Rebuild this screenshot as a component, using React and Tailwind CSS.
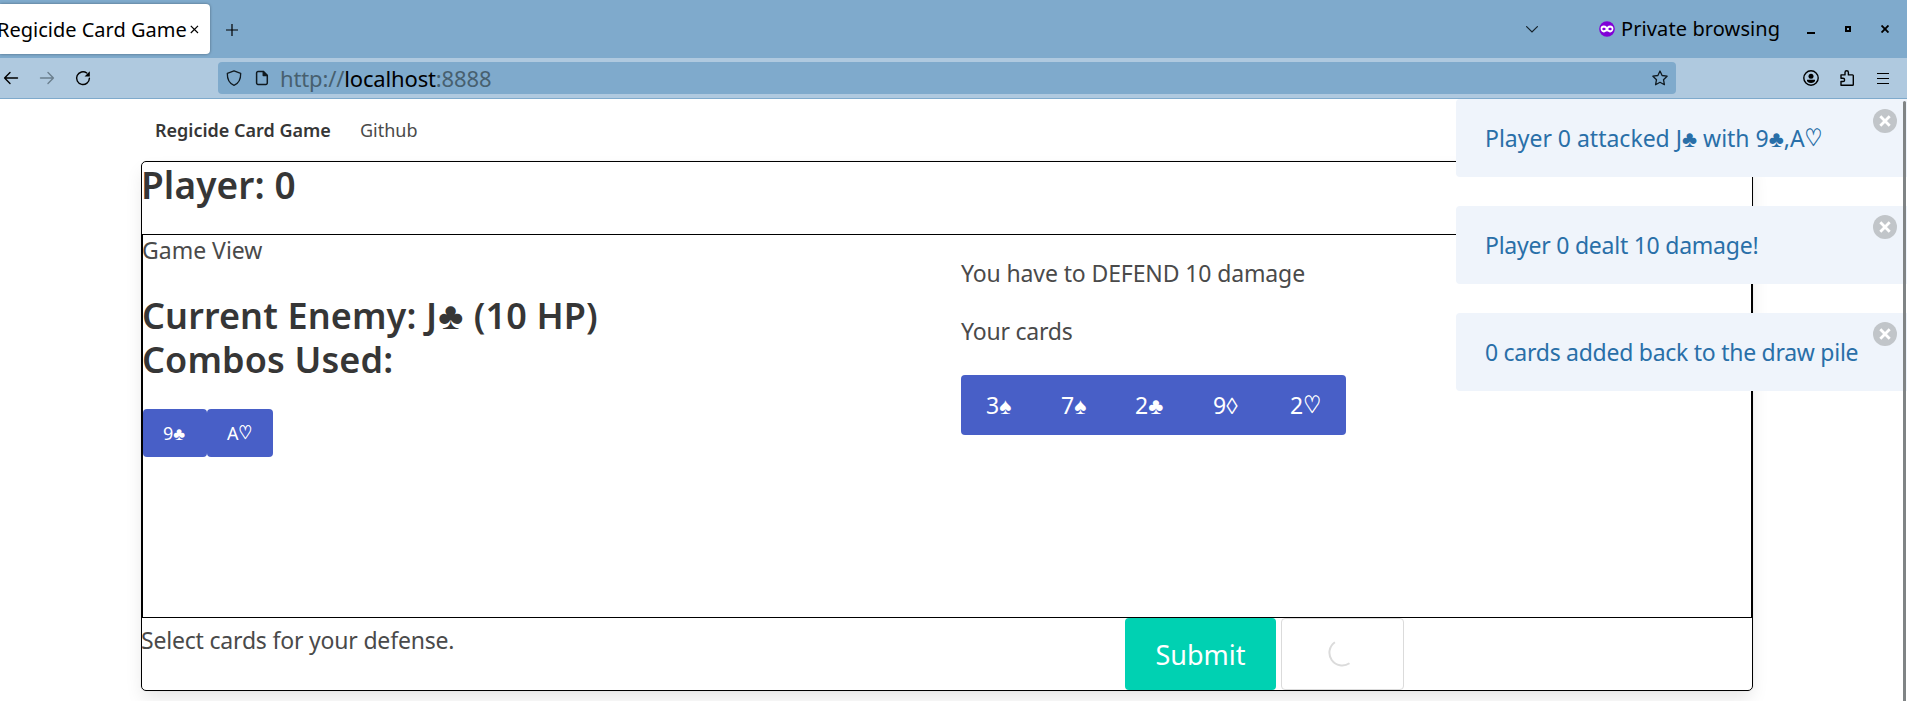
import React from 'react';

const noto = "font-['Noto_Sans','DejaVu_Sans',sans-serif]";

// Card suits use their own face so they sit at digit height beside the rank.
function Suits({ text, suitClass = '' }) {
  return text.split(/([♣♠◊♡])/).map((part, i) => {
    if (part === '♡') {
      return (
        <span key={i} className="inline-block origin-bottom scale-y-[1.22] font-['DejaVu_Sans',sans-serif] text-[0.86em] leading-none tracking-normal [-webkit-text-stroke:0.4px_currentColor]">{part}</span>
      );
    }
    if (/[♣♠◊]/.test(part)) {
      return <span key={i} className={`font-['Liberation_Sans',sans-serif] font-normal leading-none tracking-normal ${suitClass}`}>{part}</span>;
    }
    return part;
  });
}

function TabStrip() {
  return (
    <div className="flex h-[58px] items-start bg-[#7faacc] pt-1 text-black">
      <div className="flex h-[50px] w-[210px] shrink-0 items-center rounded-r bg-white shadow-[0_0_3px_rgba(0,0,0,0.4)]">
        <span className="ml-[-3px] w-[193px] whitespace-nowrap text-[20px] leading-[51px]">Regicide Card Game</span>
        <svg className="shrink-0" width="9" height="9" viewBox="0 0 9 9" stroke="#000" strokeWidth="1.2" fill="none">
          <path d="M.8.8l7.2 7.2M8 .8L.8 8" />
        </svg>
      </div>
      <svg className="ml-4 mt-5" width="12" height="12" viewBox="0 0 12 12" stroke="#000" strokeWidth="1.2" fill="none">
        <path d="M6 0v12M0 6h12" />
      </svg>
      <div className="ml-auto flex h-[50px] items-center">
        <svg width="12" height="7" viewBox="0 0 12 7" stroke="#15222b" strokeWidth="1.2" fill="none" strokeLinecap="round">
          <path d="M.6.6L6 6 11.4.6" />
        </svg>
        <svg className="ml-[61px]" width="16" height="16" viewBox="0 0 16 16">
          <circle cx="8" cy="8" r="7.8" fill="#8000d7" />
          <path fill="#fff" fillRule="evenodd" d="M8 5.9C7 5 5.900 4.600 4.700 4.600 2.900 4.600 1.600 5.700 1.600 7.600c0 2.200 1.400 3.800 3.200 3.800 1.400 0 2.200-1.200 3.200-1.200s1.800 1.200 3.200 1.200c1.800 0 3.200-1.600 3.200-3.800 0-1.900-1.300-3-3.100-3C10.100 4.600 9 5 8 5.900zM5 9.200c-1 0-1.700-.7-1.700-1.300S4 6.700 5 6.700s1.700.7 1.700 1.300S6 9.200 5 9.200zm6 0c-1 0-1.700-.6-1.700-1.200S10 6.700 11 6.700s1.700.6 1.700 1.200S12 9.200 11 9.200z" />
        </svg>
        <span className="ml-[6px] w-[159px] whitespace-nowrap text-[20px] leading-[50px] tracking-[0.1px]">Private browsing</span>
        <div className="ml-[27px] mt-[7px] h-[2px] w-2 bg-black" />
        <div className="ml-[30px] size-[6px] border-2 border-black" />
        <svg className="ml-[30px] mr-[18px]" width="8" height="8" viewBox="0 0 8 8" stroke="#000" strokeWidth="1.9" fill="none">
          <path d="M.5.5l7 7M7.500.5l-7 7" />
        </svg>
      </div>
    </div>
  );
}

function Toolbar() {
  return (
    <div className="flex h-[41px] items-center border-b border-[#7faacc] bg-[#afc9df]">
      <svg className="ml-[3px]" width="16" height="16" viewBox="0 0 16 16" fill="none" stroke="#000" strokeWidth="1.4" strokeLinecap="round" strokeLinejoin="round">
        <path d="M14.500 8H1.600M7 2.600L1.600 8 7 13.400" />
      </svg>
      <svg className="ml-5" width="16" height="16" viewBox="0 0 16 16" fill="none" stroke="#6b7f8e" strokeWidth="1.4" strokeLinecap="round" strokeLinejoin="round">
        <path d="M1.500 8h12.900M9 2.600L14.400 8 9 13.400" />
      </svg>
      <svg className="ml-5" width="16" height="16" viewBox="0 0 16 16" fill="none" stroke="#000" strokeWidth="1.4" strokeLinecap="round">
        <path d="M11.800 3A6.400 6.400 0 1 0 14.400 8.200" />
        <path d="M14.800 1.300v5.200H9.600z" fill="#000" stroke="none" />
      </svg>
      <div className="ml-[127px] flex h-8 w-[1458px] shrink-0 items-center rounded bg-[#7faacc]">
        <svg className="ml-2" width="16" height="16" viewBox="0 0 16 16" fill="none" stroke="#101a20" strokeWidth="1.3" strokeLinejoin="round">
          <path d="M8 .8L1.300 3.300C1.200 8.500 3 13.400 8 15.300c5-1.900 6.800-6.800 6.700-12z" />
        </svg>
        <svg className="ml-[13px]" width="14" height="16" viewBox="0 0 14 16" fill="none" stroke="#101a20" strokeWidth="1.5" strokeLinejoin="round">
          <path d="M3 1.500h5.300L12.300 5.500V13a1.400 1.400 0 0 1-1.400 1.400H3A1.400 1.400 0 0 1 1.600 13V2.900A1.400 1.400 0 0 1 3 1.500z" />
          <path d="M8.300 1.500v4h4z" fill="#101a20" />
        </svg>
        <span className="ml-[11px] whitespace-nowrap text-[22px] leading-8 tracking-[-0.15px] text-[#47606f]">
          http://<span className="text-black">localhost</span>:8888
        </span>
        <svg className="ml-auto mr-2" width="16" height="16" viewBox="0 0 16 16" fill="none" stroke="#101a20" strokeWidth="1.3" strokeLinejoin="round">
          <path d="M8 1l2.100 4.500 5 .7-3.600 3.500.9 5L8 12.300l-4.400 2.400.9-5L.9 6.200l5-.7z" />
        </svg>
      </div>
      <svg className="ml-[127px]" width="16" height="16" viewBox="0 0 16 16">
        <circle cx="8" cy="8" r="7.200" fill="none" stroke="#000" strokeWidth="1.4" />
        <circle cx="8" cy="6.200" r="2.500" />
        <path d="M4 9.800h8v.8c0 1.500-1.700 2.500-4 2.500s-4-1-4-2.500z" />
      </svg>
      <svg className="ml-[20px]" width="16" height="16" viewBox="0 0 16 16" fill="none" stroke="#000" strokeWidth="1.4" strokeLinejoin="round">
        <path d="M2 15.200V11.500h2a1.600 1.600 0 0 0 0-3.200H2V4.900h4V2.400a1.700 1.700 0 0 1 3.400 0v2.500H13.500a.8.8 0 0 1 .8.8v8.700a.8.8 0 0 1-.8.8z" />
      </svg>
      <div className="ml-[22px] flex w-3 flex-col gap-1">
        <div className="h-px bg-black" />
        <div className="h-px bg-black" />
        <div className="h-px bg-black" />
      </div>
    </div>
  );
}

function Toast({ text, tracking, closeOffset }) {
  return (
    <div className="flex h-[78px] items-start rounded-l bg-[#eff4fb] pl-[29px] pt-6 text-[#296fa8]">
      <span className={`h-[30px] whitespace-nowrap text-[23px] leading-[30px] ${tracking}`}><Suits text={text} /></span>
      <svg className={`ml-auto mr-[10px] shrink-0 ${closeOffset}`} width="24" height="24" viewBox="0 0 24 24">
        <circle cx="12" cy="12" r="12" fill="#c1c5c9" />
        <path d="M7.300 7.300l9.400 9.400M16.700 7.300l-9.400 9.400" stroke="#fff" strokeWidth="2.800" />
      </svg>
    </div>
  );
}

const handCards = [
  ['3♠', 'w-[74px] pl-[25px]'],
  ['7♠', 'w-[75px] pl-[26px]'],
  ['2♣', 'w-[77px] pl-[25px]'],
  ['9◊', 'w-[78px] pl-[26px]'],
  ['2♡', 'w-[81px] pl-[25px]'],
];

export default function App() {
  return (
    <div className={`relative h-[701px] w-[1907px] overflow-hidden bg-white ${noto}`}>
      <TabStrip />
      <Toolbar />

      <main className="relative h-[602px] overflow-hidden text-[23px] leading-[30px] text-[#4a4a4a]">
        <nav className="flex h-[62px] items-center pl-[155px] text-[18px]">
          <span className="w-[205px] whitespace-nowrap font-semibold text-[#363636]">Regicide Card Game</span>
          <span>Github</span>
        </nav>

        <section className="ml-[141px] h-[530px] w-[1612px] rounded-[5px] border border-black shadow-[0_9px_18px_-2px_rgba(10,10,10,0.1),0_0_0_1px_rgba(10,10,10,0.02)]">
          <h1 className="ml-[-1px] h-[72px] whitespace-nowrap text-[37px] font-semibold leading-[45px] tracking-[0.1px] text-[#363636]">Player: 0</h1>

          <div className="flex h-[384px] border border-black">
            <div className="w-[818px]">
              <p className="ml-[-1px]">Game View</p>
              <h2 className="ml-[-1px] mt-[28px] text-[36px] font-semibold leading-[45px] tracking-[0.12px] text-[#363636]">
                <span className="block h-[44px] whitespace-nowrap"><Suits text="Current Enemy: J♣ (10 HP)" suitClass="mx-px text-[1.06em]" /></span>
                <span className="block h-[45px] whitespace-nowrap">Combos Used:</span>
              </h2>
              <div className="mt-[27px] flex text-[18px] leading-[48px] text-white">
                <span className="h-12 w-16 rounded bg-[#485fc7] pl-5"><Suits text="9♣" /></span>
                <span className="h-12 w-[66px] rounded bg-[#485fc7] pl-5"><Suits text="A♡" /></span>
              </div>
            </div>

            <div className="pt-[23px]">
              <p className="whitespace-nowrap tracking-[-0.12px]">You have to DEFEND 10 damage</p>
              <p className="mt-7 whitespace-nowrap tracking-[-0.2px]">Your cards</p>
              <div className="mt-[29px] flex h-[60px] w-[385px] overflow-hidden rounded bg-[#485fc7] leading-[60px] text-white">
                {handCards.map(([card, box]) => (
                  <span key={card} className={`shrink-0 whitespace-nowrap ${box}`}><Suits text={card} /></span>
                ))}
              </div>
            </div>
          </div>

          <div className="flex h-[72px]">
            <p className="ml-[-1px] w-[984px] whitespace-nowrap pt-[7px] tracking-[-0.19px]">Select cards for your defense.</p>
            <button className="h-[72px] w-[151px] rounded bg-[#00d1b2] pt-0.5 text-[27px] leading-[70px] text-white">Submit</button>
            <div className="ml-[5px] flex h-[72px] w-[123px] items-center justify-center rounded border border-[#dbdbdb]">
              <svg className="mb-[3px] mr-1" width="28" height="28" viewBox="0 0 28 28" fill="none" stroke="#dbdbdb" strokeWidth="2">
                <path d="M7.900 3.200A12.600 12.600 0 0 0 22.500 24.200" />
              </svg>
            </div>
          </div>
        </section>

        <aside className="absolute right-0 top-0 flex w-[451px] flex-col gap-[29px]">
          <Toast tracking="tracking-[-0.01px]" closeOffset="mt-[-14px]" text="Player 0 attacked J♣ with 9♣,A♡" />
          <Toast tracking="tracking-[-0.24px]" closeOffset="mt-[-15px]" text="Player 0 dealt 10 damage!" />
          <Toast tracking="tracking-[-0.27px]" closeOffset="mt-[-15px]" text="0 cards added back to the draw pile" />
        </aside>
        <div className="absolute bottom-0 right-px top-[2px] w-[3px] rounded-t bg-[#808485]" />
      </main>
    </div>
  );
}
